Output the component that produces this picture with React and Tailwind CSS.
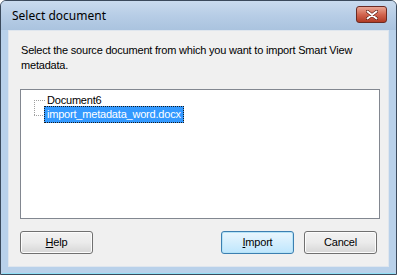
import React from "react";

const TreeLines = () => (
  <svg width="12" height="17" className="absolute left-[13px] top-[10px]" shapeRendering="crispEdges">
    <line x1="0.5" y1="0" x2="0.5" y2="16" stroke="#a0a0a0" strokeDasharray="1 1" />
    <line x1="0" y1="0.5" x2="11" y2="0.5" stroke="#a0a0a0" strokeDasharray="1 1" />
    <line x1="0" y1="15.5" x2="11" y2="15.5" stroke="#a0a0a0" strokeDasharray="1 1" />
  </svg>
);

const Button = ({ children, focused, className = "" }) => (
  <button
    className={`h-[23px] w-[73px] rounded-[3px] border text-[11px] text-black flex items-center justify-center ${
      focused
        ? "border-[#3c7fb1] shadow-[inset_0_0_0_1px_#b5e3f7] bg-gradient-to-b from-[#eaf6fd] to-[#bee6fd]"
        : "border-[#707070] shadow-[inset_0_0_0_1px_#fcfcfc] bg-gradient-to-b from-[#f2f2f2] via-[#ebebeb] to-[#d6d6d6]"
    } ${className}`}
  >
    {children}
  </button>
);

const App = () => {
  return (
    <div
      className="w-[397px] h-[275px] bg-[#b9d1ea] border border-[#3b4a5c] rounded-t-[6px] flex flex-col overflow-hidden tracking-[-0.2px]"
      style={{ fontFamily: '"Liberation Sans", Arial, sans-serif' }}
    >
      <div className="h-[29px] shrink-0 flex items-center justify-between pl-[11px] pr-[9px] bg-gradient-to-b from-[#c9dbee] via-[#b7cde6] to-[#aac3df]">
        <span
          className="text-[12px] text-black tracking-normal"
          style={{ fontFamily: '"Noto Sans", "Open Sans", sans-serif' }}
        >
          Select document
        </span>
        <div className="w-[31px] h-[17px] mt-[-2px] rounded-[3px] border border-[#6b2a22] bg-gradient-to-b from-[#e7a593] via-[#d26650] to-[#b13a24] flex items-center justify-center">
          <svg width="12" height="10" viewBox="0 0 12 10">
            <path d="M1.5 1.5 L10.5 8.5 M10.5 1.5 L1.5 8.5" stroke="#5a1a10" strokeWidth="3.2" strokeLinecap="round" />
            <path d="M1.5 1.5 L10.5 8.5 M10.5 1.5 L1.5 8.5" stroke="#ffffff" strokeWidth="2" strokeLinecap="round" />
          </svg>
        </div>
      </div>
      <div className="mx-[7px] h-[237px] bg-[#f0f0f0] border border-[#dfe6ee] px-[11px] pt-[12px] flex flex-col">
        <p className="text-[11px] leading-[15px] text-black pl-[1px] w-[350px]">
          Select the source document from which you want to import Smart View metadata.
        </p>
        <div className="relative mt-[16px] h-[130px] w-[360px] border border-[#828790] bg-white">
          <TreeLines />
          <div className="absolute left-[25px] top-[3px] text-[11px] leading-[14px] text-black px-[1px]">
            Document6
          </div>
          <div className="absolute left-[23px] top-[16px] h-[17px] px-[2px] bg-[#3399ff] text-white text-[11px] leading-[15px] border border-dotted border-[#1a1a1a] flex items-center">
            import_metadata_word.docx
          </div>
        </div>
        <div className="mt-[12px] flex items-center">
          <Button>
            <span className="underline">H</span>elp
          </Button>
          <Button focused className="ml-auto">
            <span className="underline">I</span>mport
          </Button>
          <Button className="ml-[10px]">Cancel</Button>
        </div>
      </div>
      <div className="mx-[1px] h-[1px] bg-[#8fe0f6] mt-auto" />
    </div>
  );
};

export default App;
